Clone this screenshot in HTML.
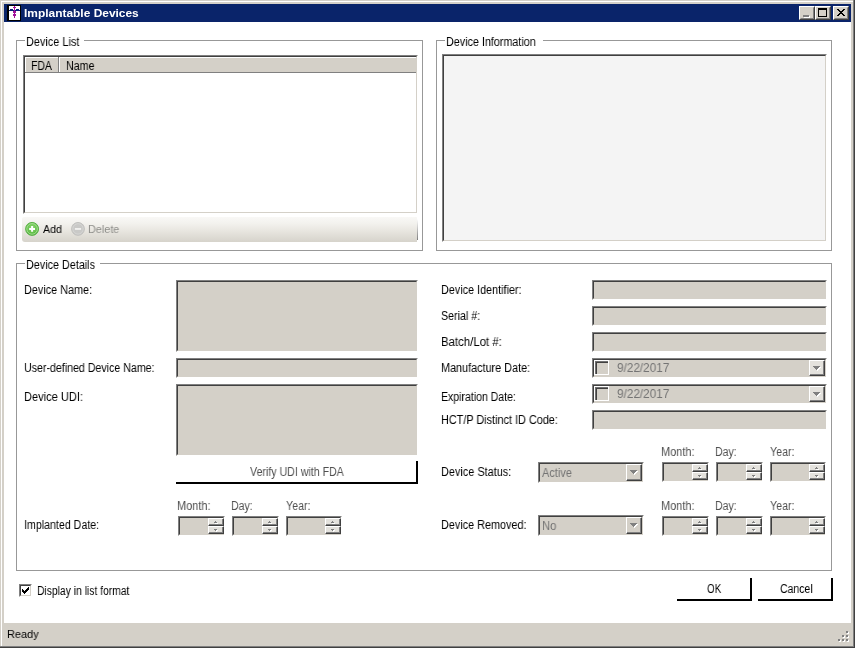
<!DOCTYPE html>
<html><head><meta charset="utf-8"><title>Implantable Devices</title><style>
html,body{margin:0;padding:0}
body{width:855px;height:648px;overflow:hidden;background:#fff;position:relative;font-family:"Liberation Sans",sans-serif}
body>div,body>svg,body>span,i,div>svg{position:absolute;display:block}
.t{will-change:transform;white-space:nowrap;line-height:16px;transform-origin:0 0;display:inline-block}
.sk{border:1px solid;border-color:#808080 #fff #fff #808080}
.sk>div{position:relative;border:1px solid;border-color:#404040 #d4d0c8 #d4d0c8 #404040}
.rb{border:1px solid;border-color:#fff #404040 #404040 #fff;background:#d4d0c8}
.rb>div{position:relative;border:1px solid;border-color:#d4d0c8 #808080 #808080 #d4d0c8}
</style></head><body>
<div style="left:0px;top:0px;width:855px;height:648px;background:#d4d0c8"></div>
<div style="left:1px;top:1px;width:852px;height:645px;background:#fff"></div>
<div style="left:2px;top:2px;width:851px;height:644px;background:#d4d0c8"></div>
<div style="left:853px;top:0px;width:1px;height:647px;background:#808080"></div>
<div style="left:0px;top:646px;width:854px;height:1px;background:#808080"></div>
<div style="left:854px;top:0px;width:1px;height:648px;background:#404040"></div>
<div style="left:0px;top:647px;width:855px;height:1px;background:#404040"></div>
<div style="left:4px;top:4px;width:847px;height:18px;background:#0a246a"></div>
<div style="left:4px;top:22px;width:847px;height:601px;background:#fff"></div>
<svg style="left:7px;top:5px" width="14" height="16" viewBox="0 0 14 16" shape-rendering="crispEdges">
<rect x="0" y="0" width="14" height="16" fill="#000"/>
<rect x="2" y="1" width="11" height="14" fill="#fff"/>
<path d="M2 5h1v-1h3v1h1v1h-5zM13 5h-1v-1h-3v1h-1v1h5z" fill="#0a1e7a"/>
<rect x="7" y="1" width="1" height="12" fill="#a0109a"/>
<rect x="6" y="2" width="3" height="1" fill="#a0109a"/>
<rect x="6" y="6" width="3" height="2" fill="#a0109a"/>
<rect x="6" y="9" width="3" height="2" fill="#a0109a"/>
</svg>
<div class="rb" style="left:799px;top:6px;width:14px;height:12px"><div style="width:12px;height:10px"><i style="left:2px;top:7px;width:6px;height:2px;background:#fff;margin:1px 0 0 1px"></i><i style="left:2px;top:7px;width:6px;height:2px;background:#808080"></i></div></div>
<div class="rb" style="left:815px;top:6px;width:14px;height:12px"><div style="width:12px;height:10px"><i style="left:1px;top:0px;width:7px;height:6px;border:1px solid #000;border-top-width:2px"></i></div></div>
<div class="rb" style="left:833px;top:6px;width:14px;height:12px"><div style="width:12px;height:10px"><svg style="left:2px;top:1px" width="8" height="7" viewBox="0 0 8 7" shape-rendering="crispEdges"><path d="M0 0h2v1h1v1h2v-1h1v-1h2v1h-1v1h-1v1h-1v1h1v1h1v1h1v1h-2v-1h-1v-1h-2v1h-1v1h-2v-1h1v-1h1v-1h1v-1h-1v-1h-1v-1h-1z" fill="#000"/></svg></div></div>
<div style="left:16px;top:40px;width:1px;height:211px;background:#989898"></div>
<div style="left:422px;top:40px;width:1px;height:211px;background:#989898"></div>
<div style="left:16px;top:250px;width:407px;height:1px;background:#989898"></div>
<div style="left:16px;top:40px;width:9px;height:1px;background:#989898"></div>
<div style="left:84px;top:40px;width:339px;height:1px;background:#989898"></div>
<div class="sk" style="left:23px;top:55px;width:393px;height:157px"><div style="width:391px;height:155px;background:#fff"></div></div>
<div style="left:25px;top:57px;width:391px;height:16px;background:#d4d0c8;border-bottom:1px solid #808080;box-sizing:border-box"></div>
<div style="left:25px;top:57px;width:391px;height:1px;background:#fff"></div>
<div style="left:25px;top:57px;width:1px;height:15px;background:#fff"></div>
<div style="left:58px;top:57px;width:1px;height:16px;background:#808080"></div>
<div style="left:59px;top:57px;width:1px;height:15px;background:#fff"></div>
<div style="left:22px;top:217px;width:395px;height:25px;border-radius:2px 0 0 3px;background:linear-gradient(#f9f8f6 0%,#f3f2ee 25%,#e8e6e0 55%,#d6d3cb 100%)"></div>
<div style="left:417px;top:219px;width:1px;height:21px;background:linear-gradient(rgba(128,128,128,0),#7c7c7c)"></div>
<svg style="left:24px;top:221px" width="16" height="16" viewBox="0 0 16 16">
<defs><radialGradient id="g1" cx="0.5" cy="0.4" r="0.65"><stop offset="0" stop-color="#8fd873"/><stop offset="0.7" stop-color="#5cbd43"/><stop offset="1" stop-color="#48a636"/></radialGradient></defs>
<circle cx="8.1" cy="7.9" r="6.5" fill="url(#g1)" stroke="#52ad40" stroke-width="0.9"/>
<circle cx="8.1" cy="7.9" r="5.3" fill="none" stroke="#c4ecb4" stroke-width="0.9" opacity="0.75"/>
<path d="M7.1 5h2v1.9h1.9v2h-1.9v1.9h-2v-1.9h-1.9v-2h1.9z" fill="#fff"/></svg>
<svg style="left:70px;top:221px" width="16" height="16" viewBox="0 0 16 16">
<circle cx="8" cy="7.9" r="6.4" fill="#c9c9c7" stroke="#bcbcba" stroke-width="0.9"/>
<circle cx="8" cy="7.9" r="5.2" fill="none" stroke="#dadad8" stroke-width="0.9" opacity="0.8"/>
<rect x="4.9" y="7" width="6.2" height="1.9" fill="#f0f0ee"/></svg>
<div style="left:436px;top:40px;width:1px;height:211px;background:#989898"></div>
<div style="left:831px;top:40px;width:1px;height:211px;background:#989898"></div>
<div style="left:436px;top:250px;width:396px;height:1px;background:#989898"></div>
<div style="left:436px;top:40px;width:9px;height:1px;background:#989898"></div>
<div style="left:543px;top:40px;width:289px;height:1px;background:#989898"></div>
<div class="sk" style="left:442px;top:54px;width:383px;height:186px"><div style="width:381px;height:184px;background:#f4f4f4"></div></div>
<div style="left:16px;top:263px;width:1px;height:308px;background:#989898"></div>
<div style="left:831px;top:263px;width:1px;height:308px;background:#989898"></div>
<div style="left:16px;top:570px;width:816px;height:1px;background:#989898"></div>
<div style="left:16px;top:263px;width:9px;height:1px;background:#989898"></div>
<div style="left:100px;top:263px;width:732px;height:1px;background:#989898"></div>
<div class="sk" style="left:176px;top:280px;width:240px;height:70px"><div style="width:238px;height:68px;background:#d4d0c8"></div></div>
<div class="sk" style="left:176px;top:358px;width:240px;height:18px"><div style="width:238px;height:16px;background:#d4d0c8"></div></div>
<div class="sk" style="left:176px;top:384px;width:240px;height:70px"><div style="width:238px;height:68px;background:#d4d0c8"></div></div>
<div style="left:176px;top:461px;width:242px;height:23px;background:#fff;box-sizing:border-box;border-right:2px solid #000;border-bottom:2px solid #000"></div>
<div class="sk" style="left:178px;top:516px;width:45px;height:18px"><div style="width:43px;height:16px;background:#d4d0c8"></div></div>
<div style="left:208px;top:518px;width:16px;height:8px;background:#e4e2dd;box-sizing:border-box;border-left:1px solid #fff;border-top:1px solid #fff;border-right:1px solid #404040;border-bottom:1px solid #404040"></div>
<div style="left:209px;top:519px;width:14px;height:6px;box-sizing:border-box;border-right:1px solid #808080;border-bottom:1px solid #808080"></div>
<div style="left:208px;top:526px;width:16px;height:8px;background:#e4e2dd;box-sizing:border-box;border-left:1px solid #fff;border-top:1px solid #fff;border-right:1px solid #404040;border-bottom:1px solid #404040"></div>
<div style="left:209px;top:527px;width:14px;height:6px;box-sizing:border-box;border-right:1px solid #808080;border-bottom:1px solid #808080"></div>
<svg style="left:214px;top:521px" width="4" height="3" viewBox="0 0 4 3" shape-rendering="crispEdges"><path d="M2 1h1v1h1v1h-3v-1h1z" fill="#fff"/><path d="M1 0h1v1h1v1h-3v-1h1z" fill="#808080"/></svg>
<svg style="left:214px;top:529px" width="4" height="3" viewBox="0 0 4 3" shape-rendering="crispEdges"><path d="M1 1h3v1h-1v1h-1v-1h-1z" fill="#fff"/><path d="M0 0h3v1h-1v1h-1v-1h-1z" fill="#808080"/></svg>
<div class="sk" style="left:232px;top:516px;width:45px;height:18px"><div style="width:43px;height:16px;background:#d4d0c8"></div></div>
<div style="left:262px;top:518px;width:16px;height:8px;background:#e4e2dd;box-sizing:border-box;border-left:1px solid #fff;border-top:1px solid #fff;border-right:1px solid #404040;border-bottom:1px solid #404040"></div>
<div style="left:263px;top:519px;width:14px;height:6px;box-sizing:border-box;border-right:1px solid #808080;border-bottom:1px solid #808080"></div>
<div style="left:262px;top:526px;width:16px;height:8px;background:#e4e2dd;box-sizing:border-box;border-left:1px solid #fff;border-top:1px solid #fff;border-right:1px solid #404040;border-bottom:1px solid #404040"></div>
<div style="left:263px;top:527px;width:14px;height:6px;box-sizing:border-box;border-right:1px solid #808080;border-bottom:1px solid #808080"></div>
<svg style="left:268px;top:521px" width="4" height="3" viewBox="0 0 4 3" shape-rendering="crispEdges"><path d="M2 1h1v1h1v1h-3v-1h1z" fill="#fff"/><path d="M1 0h1v1h1v1h-3v-1h1z" fill="#808080"/></svg>
<svg style="left:268px;top:529px" width="4" height="3" viewBox="0 0 4 3" shape-rendering="crispEdges"><path d="M1 1h3v1h-1v1h-1v-1h-1z" fill="#fff"/><path d="M0 0h3v1h-1v1h-1v-1h-1z" fill="#808080"/></svg>
<div class="sk" style="left:286px;top:516px;width:54px;height:18px"><div style="width:52px;height:16px;background:#d4d0c8"></div></div>
<div style="left:325px;top:518px;width:16px;height:8px;background:#e4e2dd;box-sizing:border-box;border-left:1px solid #fff;border-top:1px solid #fff;border-right:1px solid #404040;border-bottom:1px solid #404040"></div>
<div style="left:326px;top:519px;width:14px;height:6px;box-sizing:border-box;border-right:1px solid #808080;border-bottom:1px solid #808080"></div>
<div style="left:325px;top:526px;width:16px;height:8px;background:#e4e2dd;box-sizing:border-box;border-left:1px solid #fff;border-top:1px solid #fff;border-right:1px solid #404040;border-bottom:1px solid #404040"></div>
<div style="left:326px;top:527px;width:14px;height:6px;box-sizing:border-box;border-right:1px solid #808080;border-bottom:1px solid #808080"></div>
<svg style="left:331px;top:521px" width="4" height="3" viewBox="0 0 4 3" shape-rendering="crispEdges"><path d="M2 1h1v1h1v1h-3v-1h1z" fill="#fff"/><path d="M1 0h1v1h1v1h-3v-1h1z" fill="#808080"/></svg>
<svg style="left:331px;top:529px" width="4" height="3" viewBox="0 0 4 3" shape-rendering="crispEdges"><path d="M1 1h3v1h-1v1h-1v-1h-1z" fill="#fff"/><path d="M0 0h3v1h-1v1h-1v-1h-1z" fill="#808080"/></svg>
<div class="sk" style="left:592px;top:280px;width:233px;height:18px"><div style="width:231px;height:16px;background:#d4d0c8"></div></div>
<div class="sk" style="left:592px;top:306px;width:233px;height:18px"><div style="width:231px;height:16px;background:#d4d0c8"></div></div>
<div class="sk" style="left:592px;top:332px;width:233px;height:18px"><div style="width:231px;height:16px;background:#d4d0c8"></div></div>
<div class="sk" style="left:592px;top:410px;width:233px;height:18px"><div style="width:231px;height:16px;background:#d4d0c8"></div></div>
<div class="sk" style="left:592px;top:358px;width:233px;height:18px"><div style="width:231px;height:16px;background:#d4d0c8"></div></div>
<div style="left:594px;top:360px;width:15px;height:15px;background:#fff"></div>
<div style="left:595px;top:361px;width:13px;height:13px;background:#404040"></div>
<div style="left:595px;top:361px;width:13px;height:1px;background:#707070"></div>
<div style="left:595px;top:361px;width:1px;height:13px;background:#707070"></div>
<div style="left:597px;top:363px;width:11px;height:11px;background:#d4d0c8"></div>
<div style="left:809px;top:360px;width:16px;height:16px;background:#e4e2dd;box-sizing:border-box;border-left:1px solid #fff;border-top:1px solid #fff;border-right:1px solid #404040;border-bottom:1px solid #404040"></div>
<div style="left:810px;top:361px;width:14px;height:14px;box-sizing:border-box;border-right:1px solid #808080;border-bottom:1px solid #808080"></div>
<svg style="left:813px;top:366px" width="8" height="5" viewBox="0 0 8 5" shape-rendering="crispEdges"><path d="M1 1h7v1h-1v1h-1v1h-1v1h-1v-1h-1v-1h-1v-1h-1z" fill="#fff"/><path d="M0 0h7v1h-1v1h-1v1h-1v1h-1v-1h-1v-1h-1v-1h-1z" fill="#808080"/></svg>
<div class="sk" style="left:592px;top:384px;width:233px;height:18px"><div style="width:231px;height:16px;background:#d4d0c8"></div></div>
<div style="left:594px;top:386px;width:15px;height:15px;background:#fff"></div>
<div style="left:595px;top:387px;width:13px;height:13px;background:#404040"></div>
<div style="left:595px;top:387px;width:13px;height:1px;background:#707070"></div>
<div style="left:595px;top:387px;width:1px;height:13px;background:#707070"></div>
<div style="left:597px;top:389px;width:11px;height:11px;background:#d4d0c8"></div>
<div style="left:809px;top:386px;width:16px;height:16px;background:#e4e2dd;box-sizing:border-box;border-left:1px solid #fff;border-top:1px solid #fff;border-right:1px solid #404040;border-bottom:1px solid #404040"></div>
<div style="left:810px;top:387px;width:14px;height:14px;box-sizing:border-box;border-right:1px solid #808080;border-bottom:1px solid #808080"></div>
<svg style="left:813px;top:392px" width="8" height="5" viewBox="0 0 8 5" shape-rendering="crispEdges"><path d="M1 1h7v1h-1v1h-1v1h-1v1h-1v-1h-1v-1h-1v-1h-1z" fill="#fff"/><path d="M0 0h7v1h-1v1h-1v1h-1v1h-1v-1h-1v-1h-1v-1h-1z" fill="#808080"/></svg>
<div class="sk" style="left:538px;top:462px;width:104px;height:19px"><div style="width:102px;height:17px;background:#d4d0c8"></div></div>
<div style="left:626px;top:464px;width:16px;height:17px;background:#d4d0c8;box-sizing:border-box;border-left:1px solid #fff;border-top:1px solid #fff;border-right:1px solid #404040;border-bottom:1px solid #404040"></div>
<div style="left:627px;top:465px;width:14px;height:15px;box-sizing:border-box;border-right:1px solid #808080;border-bottom:1px solid #808080"></div>
<svg style="left:630px;top:470px" width="8" height="5" viewBox="0 0 8 5" shape-rendering="crispEdges"><path d="M1 1h7v1h-1v1h-1v1h-1v1h-1v-1h-1v-1h-1v-1h-1z" fill="#fff"/><path d="M0 0h7v1h-1v1h-1v1h-1v1h-1v-1h-1v-1h-1v-1h-1z" fill="#808080"/></svg>
<div class="sk" style="left:538px;top:515px;width:104px;height:19px"><div style="width:102px;height:17px;background:#d4d0c8"></div></div>
<div style="left:626px;top:517px;width:16px;height:17px;background:#d4d0c8;box-sizing:border-box;border-left:1px solid #fff;border-top:1px solid #fff;border-right:1px solid #404040;border-bottom:1px solid #404040"></div>
<div style="left:627px;top:518px;width:14px;height:15px;box-sizing:border-box;border-right:1px solid #808080;border-bottom:1px solid #808080"></div>
<svg style="left:630px;top:523px" width="8" height="5" viewBox="0 0 8 5" shape-rendering="crispEdges"><path d="M1 1h7v1h-1v1h-1v1h-1v1h-1v-1h-1v-1h-1v-1h-1z" fill="#fff"/><path d="M0 0h7v1h-1v1h-1v1h-1v1h-1v-1h-1v-1h-1v-1h-1z" fill="#808080"/></svg>
<div class="sk" style="left:662px;top:462px;width:45px;height:18px"><div style="width:43px;height:16px;background:#d4d0c8"></div></div>
<div style="left:692px;top:464px;width:16px;height:8px;background:#e4e2dd;box-sizing:border-box;border-left:1px solid #fff;border-top:1px solid #fff;border-right:1px solid #404040;border-bottom:1px solid #404040"></div>
<div style="left:693px;top:465px;width:14px;height:6px;box-sizing:border-box;border-right:1px solid #808080;border-bottom:1px solid #808080"></div>
<div style="left:692px;top:472px;width:16px;height:8px;background:#e4e2dd;box-sizing:border-box;border-left:1px solid #fff;border-top:1px solid #fff;border-right:1px solid #404040;border-bottom:1px solid #404040"></div>
<div style="left:693px;top:473px;width:14px;height:6px;box-sizing:border-box;border-right:1px solid #808080;border-bottom:1px solid #808080"></div>
<svg style="left:698px;top:467px" width="4" height="3" viewBox="0 0 4 3" shape-rendering="crispEdges"><path d="M2 1h1v1h1v1h-3v-1h1z" fill="#fff"/><path d="M1 0h1v1h1v1h-3v-1h1z" fill="#808080"/></svg>
<svg style="left:698px;top:475px" width="4" height="3" viewBox="0 0 4 3" shape-rendering="crispEdges"><path d="M1 1h3v1h-1v1h-1v-1h-1z" fill="#fff"/><path d="M0 0h3v1h-1v1h-1v-1h-1z" fill="#808080"/></svg>
<div class="sk" style="left:716px;top:462px;width:45px;height:18px"><div style="width:43px;height:16px;background:#d4d0c8"></div></div>
<div style="left:746px;top:464px;width:16px;height:8px;background:#e4e2dd;box-sizing:border-box;border-left:1px solid #fff;border-top:1px solid #fff;border-right:1px solid #404040;border-bottom:1px solid #404040"></div>
<div style="left:747px;top:465px;width:14px;height:6px;box-sizing:border-box;border-right:1px solid #808080;border-bottom:1px solid #808080"></div>
<div style="left:746px;top:472px;width:16px;height:8px;background:#e4e2dd;box-sizing:border-box;border-left:1px solid #fff;border-top:1px solid #fff;border-right:1px solid #404040;border-bottom:1px solid #404040"></div>
<div style="left:747px;top:473px;width:14px;height:6px;box-sizing:border-box;border-right:1px solid #808080;border-bottom:1px solid #808080"></div>
<svg style="left:752px;top:467px" width="4" height="3" viewBox="0 0 4 3" shape-rendering="crispEdges"><path d="M2 1h1v1h1v1h-3v-1h1z" fill="#fff"/><path d="M1 0h1v1h1v1h-3v-1h1z" fill="#808080"/></svg>
<svg style="left:752px;top:475px" width="4" height="3" viewBox="0 0 4 3" shape-rendering="crispEdges"><path d="M1 1h3v1h-1v1h-1v-1h-1z" fill="#fff"/><path d="M0 0h3v1h-1v1h-1v-1h-1z" fill="#808080"/></svg>
<div class="sk" style="left:770px;top:462px;width:54px;height:18px"><div style="width:52px;height:16px;background:#d4d0c8"></div></div>
<div style="left:809px;top:464px;width:16px;height:8px;background:#e4e2dd;box-sizing:border-box;border-left:1px solid #fff;border-top:1px solid #fff;border-right:1px solid #404040;border-bottom:1px solid #404040"></div>
<div style="left:810px;top:465px;width:14px;height:6px;box-sizing:border-box;border-right:1px solid #808080;border-bottom:1px solid #808080"></div>
<div style="left:809px;top:472px;width:16px;height:8px;background:#e4e2dd;box-sizing:border-box;border-left:1px solid #fff;border-top:1px solid #fff;border-right:1px solid #404040;border-bottom:1px solid #404040"></div>
<div style="left:810px;top:473px;width:14px;height:6px;box-sizing:border-box;border-right:1px solid #808080;border-bottom:1px solid #808080"></div>
<svg style="left:815px;top:467px" width="4" height="3" viewBox="0 0 4 3" shape-rendering="crispEdges"><path d="M2 1h1v1h1v1h-3v-1h1z" fill="#fff"/><path d="M1 0h1v1h1v1h-3v-1h1z" fill="#808080"/></svg>
<svg style="left:815px;top:475px" width="4" height="3" viewBox="0 0 4 3" shape-rendering="crispEdges"><path d="M1 1h3v1h-1v1h-1v-1h-1z" fill="#fff"/><path d="M0 0h3v1h-1v1h-1v-1h-1z" fill="#808080"/></svg>
<div class="sk" style="left:662px;top:516px;width:45px;height:18px"><div style="width:43px;height:16px;background:#d4d0c8"></div></div>
<div style="left:692px;top:518px;width:16px;height:8px;background:#e4e2dd;box-sizing:border-box;border-left:1px solid #fff;border-top:1px solid #fff;border-right:1px solid #404040;border-bottom:1px solid #404040"></div>
<div style="left:693px;top:519px;width:14px;height:6px;box-sizing:border-box;border-right:1px solid #808080;border-bottom:1px solid #808080"></div>
<div style="left:692px;top:526px;width:16px;height:8px;background:#e4e2dd;box-sizing:border-box;border-left:1px solid #fff;border-top:1px solid #fff;border-right:1px solid #404040;border-bottom:1px solid #404040"></div>
<div style="left:693px;top:527px;width:14px;height:6px;box-sizing:border-box;border-right:1px solid #808080;border-bottom:1px solid #808080"></div>
<svg style="left:698px;top:521px" width="4" height="3" viewBox="0 0 4 3" shape-rendering="crispEdges"><path d="M2 1h1v1h1v1h-3v-1h1z" fill="#fff"/><path d="M1 0h1v1h1v1h-3v-1h1z" fill="#808080"/></svg>
<svg style="left:698px;top:529px" width="4" height="3" viewBox="0 0 4 3" shape-rendering="crispEdges"><path d="M1 1h3v1h-1v1h-1v-1h-1z" fill="#fff"/><path d="M0 0h3v1h-1v1h-1v-1h-1z" fill="#808080"/></svg>
<div class="sk" style="left:716px;top:516px;width:45px;height:18px"><div style="width:43px;height:16px;background:#d4d0c8"></div></div>
<div style="left:746px;top:518px;width:16px;height:8px;background:#e4e2dd;box-sizing:border-box;border-left:1px solid #fff;border-top:1px solid #fff;border-right:1px solid #404040;border-bottom:1px solid #404040"></div>
<div style="left:747px;top:519px;width:14px;height:6px;box-sizing:border-box;border-right:1px solid #808080;border-bottom:1px solid #808080"></div>
<div style="left:746px;top:526px;width:16px;height:8px;background:#e4e2dd;box-sizing:border-box;border-left:1px solid #fff;border-top:1px solid #fff;border-right:1px solid #404040;border-bottom:1px solid #404040"></div>
<div style="left:747px;top:527px;width:14px;height:6px;box-sizing:border-box;border-right:1px solid #808080;border-bottom:1px solid #808080"></div>
<svg style="left:752px;top:521px" width="4" height="3" viewBox="0 0 4 3" shape-rendering="crispEdges"><path d="M2 1h1v1h1v1h-3v-1h1z" fill="#fff"/><path d="M1 0h1v1h1v1h-3v-1h1z" fill="#808080"/></svg>
<svg style="left:752px;top:529px" width="4" height="3" viewBox="0 0 4 3" shape-rendering="crispEdges"><path d="M1 1h3v1h-1v1h-1v-1h-1z" fill="#fff"/><path d="M0 0h3v1h-1v1h-1v-1h-1z" fill="#808080"/></svg>
<div class="sk" style="left:770px;top:516px;width:54px;height:18px"><div style="width:52px;height:16px;background:#d4d0c8"></div></div>
<div style="left:809px;top:518px;width:16px;height:8px;background:#e4e2dd;box-sizing:border-box;border-left:1px solid #fff;border-top:1px solid #fff;border-right:1px solid #404040;border-bottom:1px solid #404040"></div>
<div style="left:810px;top:519px;width:14px;height:6px;box-sizing:border-box;border-right:1px solid #808080;border-bottom:1px solid #808080"></div>
<div style="left:809px;top:526px;width:16px;height:8px;background:#e4e2dd;box-sizing:border-box;border-left:1px solid #fff;border-top:1px solid #fff;border-right:1px solid #404040;border-bottom:1px solid #404040"></div>
<div style="left:810px;top:527px;width:14px;height:6px;box-sizing:border-box;border-right:1px solid #808080;border-bottom:1px solid #808080"></div>
<svg style="left:815px;top:521px" width="4" height="3" viewBox="0 0 4 3" shape-rendering="crispEdges"><path d="M2 1h1v1h1v1h-3v-1h1z" fill="#fff"/><path d="M1 0h1v1h1v1h-3v-1h1z" fill="#808080"/></svg>
<svg style="left:815px;top:529px" width="4" height="3" viewBox="0 0 4 3" shape-rendering="crispEdges"><path d="M1 1h3v1h-1v1h-1v-1h-1z" fill="#fff"/><path d="M0 0h3v1h-1v1h-1v-1h-1z" fill="#808080"/></svg>
<div class="sk" style="left:19px;top:584px;width:11px;height:11px"><div style="width:9px;height:9px;background:#fff"><svg style="left:1px;top:1px" width="7" height="7" viewBox="0 0 7 7" shape-rendering="crispEdges"><path d="M0 2h1v1h1v1h1v-1h1v-1h1v-1h1v-1h1v3h-1v1h-1v1h-1v1h-1v1h-1v-1h-1v-1h-1z" fill="#000"/></svg></div></div>
<div style="left:677px;top:578px;width:75px;height:23px;background:#fff;box-sizing:border-box;border-right:2px solid #000;border-bottom:2px solid #000"></div>
<div style="left:758px;top:578px;width:75px;height:23px;background:#fff;box-sizing:border-box;border-right:2px solid #000;border-bottom:2px solid #000"></div>
<div style="left:4px;top:623px;width:847px;height:22px;background:#d4d0c8"></div>
<div style="left:847px;top:632px;width:2px;height:2px;background:#fff"></div>
<div style="left:846px;top:631px;width:2px;height:2px;background:#808080"></div>
<div style="left:843px;top:636px;width:2px;height:2px;background:#fff"></div>
<div style="left:842px;top:635px;width:2px;height:2px;background:#808080"></div>
<div style="left:847px;top:636px;width:2px;height:2px;background:#fff"></div>
<div style="left:846px;top:635px;width:2px;height:2px;background:#808080"></div>
<div style="left:839px;top:640px;width:2px;height:2px;background:#fff"></div>
<div style="left:838px;top:639px;width:2px;height:2px;background:#808080"></div>
<div style="left:843px;top:640px;width:2px;height:2px;background:#fff"></div>
<div style="left:842px;top:639px;width:2px;height:2px;background:#808080"></div>
<div style="left:847px;top:640px;width:2px;height:2px;background:#fff"></div>
<div style="left:846px;top:639px;width:2px;height:2px;background:#808080"></div>
<span class="t" style="left:24.00px;top:5px;font-size:11.5px;color:#fff;transform:scaleX(1.0378);font-weight:bold">Implantable Devices</span>
<span class="t" style="left:25.73px;top:34px;font-size:12.5px;color:#000;transform:scaleX(0.8717)">Device List</span>
<span class="t" style="left:31.17px;top:58px;font-size:12.5px;color:#000;transform:scaleX(0.8333)">FDA</span>
<span class="t" style="left:66.15px;top:58px;font-size:12.5px;color:#000;transform:scaleX(0.8531)">Name</span>
<span class="t" style="left:42.90px;top:221px;font-size:11.5px;color:#000;transform:scaleX(0.9250)">Add</span>
<span class="t" style="left:87.96px;top:221px;font-size:11.5px;color:#8e8e8a;transform:scaleX(0.9437)">Delete</span>
<span class="t" style="left:445.54px;top:34px;font-size:12.5px;color:#000;transform:scaleX(0.8612)">Device Information</span>
<span class="t" style="left:25.74px;top:257px;font-size:12.5px;color:#000;transform:scaleX(0.8633)">Device Details</span>
<span class="t" style="left:23.63px;top:282px;font-size:12.5px;color:#000;transform:scaleX(0.8675)">Device Name:</span>
<span class="t" style="left:23.90px;top:360px;font-size:12.5px;color:#000;transform:scaleX(0.8503)">User-defined Device Name:</span>
<span class="t" style="left:23.87px;top:389px;font-size:12.5px;color:#000;transform:scaleX(0.8846)">Device UDI:</span>
<span class="t" style="left:249.80px;top:464px;font-size:12.5px;color:#505050;transform:scaleX(0.8495)">Verify UDI with FDA</span>
<span class="t" style="left:177.12px;top:498px;font-size:12.5px;color:#505050;transform:scaleX(0.8778)">Month:</span>
<span class="t" style="left:231.26px;top:498px;font-size:12.5px;color:#505050;transform:scaleX(0.8417)">Day:</span>
<span class="t" style="left:285.50px;top:498px;font-size:12.5px;color:#505050;transform:scaleX(0.8536)">Year:</span>
<span class="t" style="left:23.90px;top:517px;font-size:12.5px;color:#000;transform:scaleX(0.8517)">Implanted Date:</span>
<span class="t" style="left:440.88px;top:282px;font-size:12.5px;color:#000;transform:scaleX(0.8654)">Device Identifier:</span>
<span class="t" style="left:440.90px;top:308px;font-size:12.5px;color:#000;transform:scaleX(0.8523)">Serial #:</span>
<span class="t" style="left:440.84px;top:334px;font-size:12.5px;color:#000;transform:scaleX(0.9115)">Batch/Lot #:</span>
<span class="t" style="left:440.88px;top:360px;font-size:12.5px;color:#000;transform:scaleX(0.8663)">Manufacture Date:</span>
<span class="t" style="left:440.91px;top:389px;font-size:12.5px;color:#000;transform:scaleX(0.8420)">Expiration Date:</span>
<span class="t" style="left:440.88px;top:412px;font-size:12.5px;color:#000;transform:scaleX(0.8684)">HCT/P Distinct ID Code:</span>
<span class="t" style="left:617.30px;top:360px;font-size:12.5px;color:#747474;transform:scaleX(0.9400)">9/22/2017</span>
<span class="t" style="left:617.30px;top:386px;font-size:12.5px;color:#747474;transform:scaleX(0.9400)">9/22/2017</span>
<span class="t" style="left:440.73px;top:464px;font-size:12.5px;color:#000;transform:scaleX(0.8722)">Device Status:</span>
<span class="t" style="left:542.00px;top:465px;font-size:12.5px;color:#747474;transform:scaleX(0.8824)">Active</span>
<span class="t" style="left:440.73px;top:517px;font-size:12.5px;color:#000;transform:scaleX(0.8670)">Device Removed:</span>
<span class="t" style="left:542.10px;top:518px;font-size:12.5px;color:#747474;transform:scaleX(0.9000)">No</span>
<span class="t" style="left:661.12px;top:444px;font-size:12.5px;color:#505050;transform:scaleX(0.8778)">Month:</span>
<span class="t" style="left:715.26px;top:444px;font-size:12.5px;color:#505050;transform:scaleX(0.8417)">Day:</span>
<span class="t" style="left:769.50px;top:444px;font-size:12.5px;color:#505050;transform:scaleX(0.8536)">Year:</span>
<span class="t" style="left:661.12px;top:498px;font-size:12.5px;color:#505050;transform:scaleX(0.8778)">Month:</span>
<span class="t" style="left:715.26px;top:498px;font-size:12.5px;color:#505050;transform:scaleX(0.8417)">Day:</span>
<span class="t" style="left:769.50px;top:498px;font-size:12.5px;color:#505050;transform:scaleX(0.8536)">Year:</span>
<span class="t" style="left:36.67px;top:583px;font-size:12.5px;color:#000;transform:scaleX(0.8261)">Display in list format</span>
<span class="t" style="left:707.40px;top:581px;font-size:12.5px;color:#000;transform:scaleX(0.7889)">OK</span>
<span class="t" style="left:779.70px;top:581px;font-size:12.5px;color:#000;transform:scaleX(0.8359)">Cancel</span>
<span class="t" style="left:6.85px;top:626px;font-size:11.5px;color:#000;transform:scaleX(0.9531)">Ready</span>
</body></html>
